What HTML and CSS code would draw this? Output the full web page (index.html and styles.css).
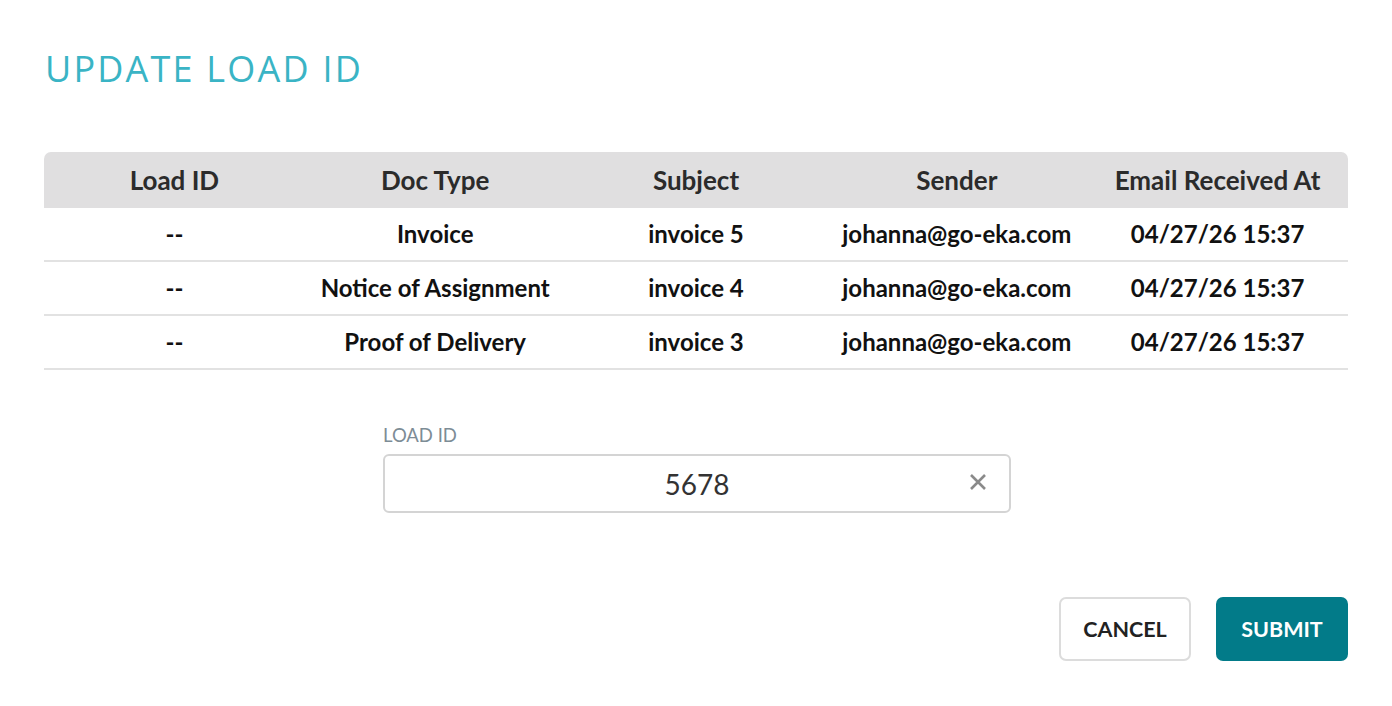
FILE: index.html
```html
<!DOCTYPE html>
<html>
<head>
<meta charset="utf-8">
<link rel="stylesheet" href="styles.css">
</head>
<body>
<div class="dialog">
  <h1 class="title">UPDATE LOAD ID</h1>
  <table class="grid">
    <thead>
      <tr><th>Load ID</th><th>Doc Type</th><th>Subject</th><th>Sender</th><th>Email Received At</th></tr>
    </thead>
    <tbody>
      <tr><td>--</td><td>Invoice</td><td>invoice 5</td><td>johanna@go-eka.com</td><td>04/27/26 15:37</td></tr>
      <tr><td>--</td><td>Notice of Assignment</td><td>invoice 4</td><td>johanna@go-eka.com</td><td>04/27/26 15:37</td></tr>
      <tr><td>--</td><td>Proof of Delivery</td><td>invoice 3</td><td>johanna@go-eka.com</td><td>04/27/26 15:37</td></tr>
    </tbody>
  </table>
  <div class="field">
    <label class="label">LOAD ID</label>
    <div class="input">
      <span class="value">5678</span>
      <svg class="clear" width="18" height="18" viewBox="0 0 18 18"><path d="M2 2 L16 16 M16 2 L2 16" stroke="#8a8a8a" stroke-width="2.6" stroke-linecap="butt"/></svg>
    </div>
  </div>
  <div class="actions">
    <button class="btn cancel">CANCEL</button>
    <button class="btn submit">SUBMIT</button>
  </div>
</div>
</body>
</html>
```
FILE: styles.css
```css
html, body { margin: 0; padding: 0; background: #fff; }
body { font-family: Lato, "Liberation Sans", sans-serif; }
.dialog { padding: 44px 44px 0 44px; }
.title {
  margin: 0 0 0 1px;
  font-family: "Open Sans", "Liberation Sans", sans-serif;
  font-weight: 400;
  font-size: 36px;
  line-height: 50px;
  color: #3ab4c5;
  letter-spacing: 2.2px;
}
.grid {
  margin-top: 58px;
  width: 100%;
  border-collapse: separate;
  border-spacing: 0;
  table-layout: fixed;
}
.grid th {
  background: #e0dfe0;
  height: 56px;
  font-size: 26px;
  line-height: 30px;
  font-weight: 700;
  color: #2b2b2b;
  text-align: center;
  padding: 0;
}
.grid th:first-child { border-top-left-radius: 7px; }
.grid th:last-child { border-top-right-radius: 7px; }
.grid td {
  height: 52px;
  font-size: 24px;
  line-height: 28px;
  font-weight: 700;
  color: #111;
  text-align: center;
  padding: 0;
  border-bottom: 2px solid #e2e2e2;
}
.field {
  width: 628px;
  margin: 54px auto 0;
  padding-left: 2px;
}
.label {
  display: block;
  font-size: 18.5px;
  color: #7d8c96;
  line-height: 22px;
  margin-bottom: 8px;
}
.input {
  position: relative;
  height: 55px;
  border: 2px solid #d4d4d4;
  border-radius: 6px;
  display: flex;
  align-items: center;
  justify-content: center;
}
.value { font-size: 28px; color: #333; }
.clear { position: absolute; right: 22px; top: 17px; }
.actions {
  display: flex;
  justify-content: flex-end;
  gap: 25px;
  margin-top: 84px;
}
.btn {
  font-family: Lato, "Liberation Sans", sans-serif;
  font-size: 21.5px;
  font-weight: 700;
  height: 64px;
  border-radius: 7px;
  cursor: pointer;
}
.cancel {
  width: 132px;
  background: #fff;
  border: 2px solid #dcdcdc;
  color: #222;
}
.submit {
  width: 132px;
  background: #027b89;
  border: none;
  color: #fff;
}
```
